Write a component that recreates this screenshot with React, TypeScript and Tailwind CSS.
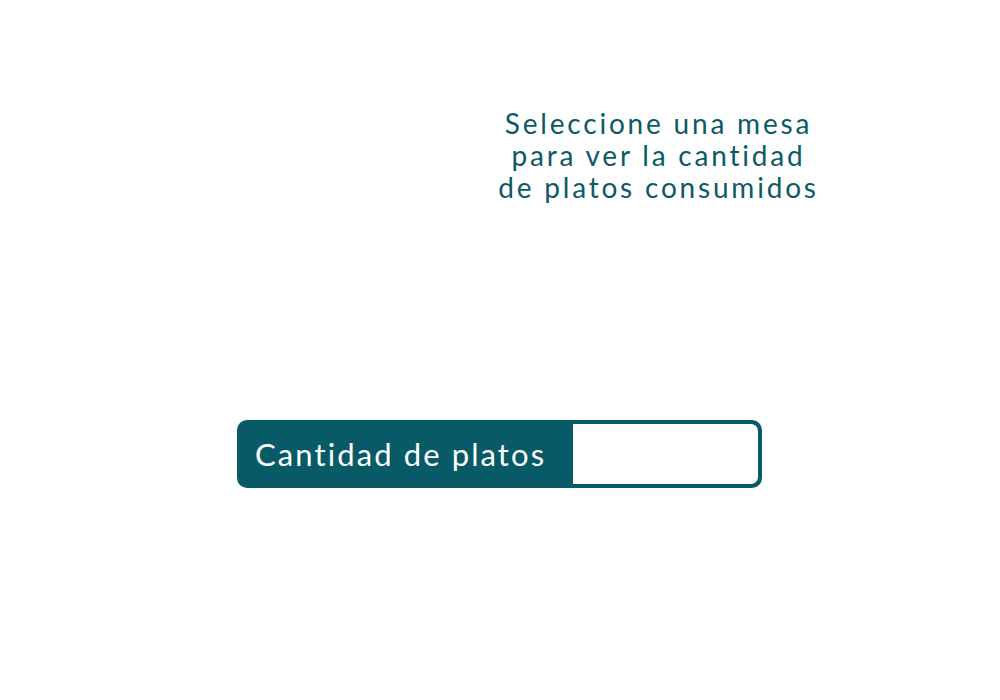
export default function App() {
  return (
    <div className="min-h-[700px] w-[1000px] bg-white font-['Lato','Liberation_Sans',sans-serif]">
      <div className="pt-[107px] pl-[480px] w-[837px]">
        <p className="whitespace-nowrap text-center text-[28px] leading-[32px] tracking-[2.8px] text-[#0b5a66]">
          Seleccione una mesa
          <br />
          para ver la cantidad
          <br />
          de platos consumidos
        </p>
      </div>

      <div className="mt-[217px] ml-[237px] w-[525px] h-[68px] flex rounded-[10px] bg-[#075a66] p-[4px]">
        <div className="w-[332px] shrink-0 flex items-center pl-[14px] whitespace-nowrap text-[31px] tracking-[2.1px] text-white">
          Cantidad de platos
        </div>
        <input
          className="w-0 min-w-0 flex-1 bg-white rounded-r-[7px] outline-none px-3 text-[24px] text-[#0b5a66]"
          type="text"
        />
      </div>
    </div>
  );
}
